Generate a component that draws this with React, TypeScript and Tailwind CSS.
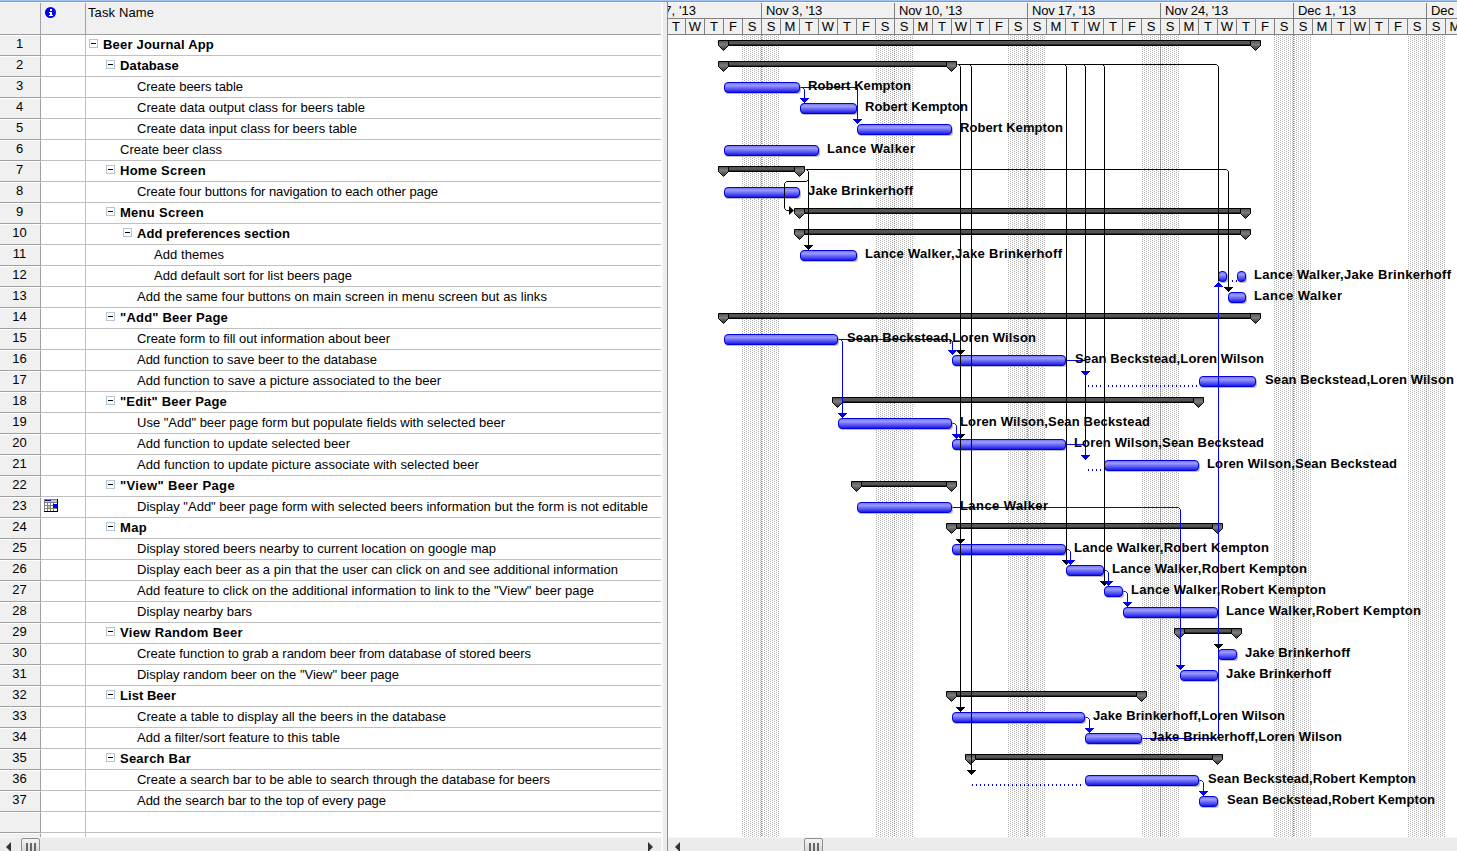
import { useLayoutEffect, useRef } from "react";

type Row = {
  name: string;
  level: number;
  width: number;
  group?: boolean;
  note?: boolean;
  summary?: [number, number];
  bars?: [number, number][];
  dots?: [number, number];
  who?: string;
  at?: number;
};

const LR = "Lance Walker,Robert Kempton";
const LJ = "Lance Walker,Jake Brinkerhoff";
const SL = "Sean Beckstead,Loren Wilson";
const LS = "Loren Wilson,Sean Beckstead";
const JL = "Jake Brinkerhoff,Loren Wilson";
const SR = "Sean Beckstead,Robert Kempton";
const RK = "Robert Kempton";
const LW = "Lance Walker";
const JB = "Jake Brinkerhoff";

const labelWidth: Record<string, number> = {
  [LR]: 195, [LJ]: 197, [SL]: 189, [LS]: 190, [JL]: 192, [SR]: 208, [RK]: 103, [LW]: 88, [JB]: 105,
};

const rows: Row[] = [
  { name: "Beer Journal App", level: 0, width: 111, group: true, summary: [723, 1255] },
  { name: "Database", level: 1, width: 59, group: true, summary: [723, 951] },
  { name: "Create beers table", level: 2, width: 106, bars: [[724, 800]], who: RK, at: 808 },
  { name: "Create data output class for beers table", level: 2, width: 228, bars: [[800, 857]], who: RK, at: 865 },
  { name: "Create data input class for beers table", level: 2, width: 220, bars: [[857, 952]], who: RK, at: 960 },
  { name: "Create beer class", level: 1, width: 102, bars: [[724, 819]], who: LW, at: 827 },
  { name: "Home Screen", level: 1, width: 86, group: true, summary: [723, 799] },
  { name: "Create four buttons for navigation to each other page", level: 2, width: 301, bars: [[724, 800]], who: JB, at: 808 },
  { name: "Menu Screen", level: 1, width: 84, group: true, summary: [799, 1245] },
  { name: "Add preferences section", level: 2, width: 153, group: true, summary: [799, 1245] },
  { name: "Add themes", level: 3, width: 70, bars: [[800, 857]], who: LJ, at: 865 },
  { name: "Add default sort for list beers page", level: 3, width: 198, bars: [[1218, 1227], [1237, 1246]], dots: [1232, 1237], who: LJ, at: 1254 },
  { name: "Add the same four buttons on main screen in menu screen but as links", level: 2, width: 410, bars: [[1228, 1246]], who: LW, at: 1254 },
  { name: "\"Add\" Beer Page", level: 1, width: 108, group: true, summary: [723, 1255] },
  { name: "Create form to fill out information about beer", level: 2, width: 253, bars: [[724, 838]], who: SL, at: 847 },
  { name: "Add function to save beer to the database", level: 2, width: 240, bars: [[952, 1066]], who: SL, at: 1075 },
  { name: "Add function to save a picture associated to the beer", level: 2, width: 304, bars: [[1199, 1256]], dots: [1088, 1198], who: SL, at: 1265 },
  { name: "\"Edit\" Beer Page", level: 1, width: 107, group: true, summary: [837, 1198] },
  { name: "Use \"Add\" beer page form but populate fields with selected beer", level: 2, width: 368, bars: [[838, 952]], who: LS, at: 960 },
  { name: "Add function to update selected beer", level: 2, width: 213, bars: [[952, 1066]], who: LS, at: 1074 },
  { name: "Add function to update picture associate with selected beer", level: 2, width: 342, bars: [[1104, 1199]], dots: [1088, 1103], who: LS, at: 1207 },
  { name: "\"View\" Beer Page", level: 1, width: 115, group: true, summary: [856, 951] },
  { name: "Display \"Add\" beer page form with selected beers information but the form is not editable", level: 2, width: 511, note: true, bars: [[857, 952]], who: LW, at: 960 },
  { name: "Map", level: 1, width: 27, group: true, summary: [951, 1217] },
  { name: "Display stored beers nearby to current location on google map", level: 2, width: 359, bars: [[952, 1066]], who: LR, at: 1074 },
  { name: "Display each beer as a pin that the user can click on and see additional information", level: 2, width: 481, bars: [[1066, 1104]], who: LR, at: 1112 },
  { name: "Add feature to click on the additional information to link to the \"View\" beer page", level: 2, width: 457, bars: [[1104, 1123]], who: LR, at: 1131 },
  { name: "Display nearby bars", level: 2, width: 115, bars: [[1123, 1218]], who: LR, at: 1226 },
  { name: "View Random Beer", level: 1, width: 123, group: true, summary: [1179, 1236] },
  { name: "Create function to grab a random beer from database of stored beers", level: 2, width: 394, bars: [[1218, 1237]], who: JB, at: 1245 },
  { name: "Display random beer on the \"View\" beer page", level: 2, width: 262, bars: [[1180, 1218]], who: JB, at: 1226 },
  { name: "List Beer", level: 1, width: 56, group: true, summary: [951, 1141] },
  { name: "Create a table to display all the beers in the database", level: 2, width: 309, bars: [[952, 1085]], who: JL, at: 1093 },
  { name: "Add a filter/sort feature to this table", level: 2, width: 203, bars: [[1085, 1142]], who: JL, at: 1150 },
  { name: "Search Bar", level: 1, width: 71, group: true, summary: [970, 1217] },
  { name: "Create a search bar to be able to search through the database for beers", level: 2, width: 413, bars: [[1085, 1199]], dots: [972, 1084], who: SR, at: 1208 },
  { name: "Add the search bar to the top of every page", level: 2, width: 249, bars: [[1199, 1218]], who: SR, at: 1227 },
];

const indents = ["pl-[3px]", "pl-[20px]", "pl-[37px]", "pl-[54px]"];
const leafIndents = ["pl-[17px]", "pl-[34px]", "pl-[51px]", "pl-[68px]"];
const weeks = ["Oct 27, '13", "Nov 3, '13", "Nov 10, '13", "Nov 17, '13", "Nov 24, '13", "Dec 1, '13", "Dec 8, '13"];
const days = ["S", "M", "T", "W", "T", "F", "S"];
const top = (n: number) => 35 + 21 * (n - 1);

function FitText({ text, width, bold }: { text: string; width: number; bold?: boolean }) {
  const ref = useRef<HTMLSpanElement>(null);
  useLayoutEffect(() => {
    const el = ref.current;
    if (!el) return;
    el.style.letterSpacing = "0px";
    const natural = el.getBoundingClientRect().width;
    el.style.letterSpacing = `${(width - natural) / text.length}px`;
  }, [text, width]);
  return (
    <span ref={ref} className={bold ? "whitespace-pre font-bold" : "whitespace-pre"}>
      {text}
    </span>
  );
}

function InfoIcon() {
  return (
    <svg width="12" height="12" viewBox="0 0 12 12" className="block">
      <circle cx="5.5" cy="5.5" r="5.5" fill="#0000f0" />
      <path d="M5 2h2v2H5zM4 5h3v3h1v1H4V8h1V6H4z" fill="#fff" shapeRendering="crispEdges" />
    </svg>
  );
}

function CalendarIcon() {
  return (
    <svg width="14" height="13" viewBox="0 0 14 13" className="block" shapeRendering="crispEdges">
      <rect width="14" height="13" fill="#000" />
      <rect width="13" height="12" fill="#808080" />
      <rect x="1" y="1" width="12" height="2" fill="#c8c8c8" />
      <rect x="1" y="1" width="6" height="1" fill="#0000a0" />
      <path d="M1 4h2v2H1zM4 4h2v2H4zM7 4h2v2H7zM10 4h3v1h-3zM1 7h2v2H1zM7 7h2v2H7zM1 10h2v2H1zM4 10h2v2H4zM7 10h2v2H7zM10 10h3v2h-3z" fill="#fff" />
      <rect x="4" y="7" width="2" height="2" fill="#c0c0c0" />
      <rect x="9" y="5" width="4" height="4" fill="#0000f0" />
    </svg>
  );
}

function Arrow({ left }: { left?: boolean }) {
  return (
    <svg width="5" height="10" viewBox="0 0 5 10" className="block">
      <path d={left ? "M5 0v10L0 5z" : "M0 0v10l5-5z"} fill="#333" />
    </svg>
  );
}

function Thumb() {
  return (
    <div className="flex h-[16px] w-[19px] justify-center gap-[2px] rounded-t-[2px] border border-[#8e8e8e] bg-linear-to-b from-[#f4f4f4] to-[#d4d4d4] pt-[4px]">
      <div className="h-[10px] w-[2px] bg-[#666]" />
      <div className="h-[10px] w-[2px] bg-[#666]" />
      <div className="h-[10px] w-[2px] bg-[#666]" />
    </div>
  );
}

function Cap({ x, y }: { x: number; y: number }) {
  return (
    <path d={`M${x - 4.5} ${y + 0.5}h10v5l-5 5l-5-5z`} fill="url(#cap)" stroke="#000" />
  );
}

function Link({ d, blue }: { d: string; blue?: boolean }) {
  return <path d={d} transform="translate(.5 .5)" fill="none" stroke={blue ? "#0000f0" : "#000"} />;
}

function Head({ x, y, blue }: { x: number; y: number; blue?: boolean }) {
  return (
    <path
      d={`M${x - 4} ${y}h9v1h-1v1h-1v1h-1v1h-1v1h-1v-1h-1v-1h-1v-1h-1v-1h-1z`}
      fill={blue ? "#0000f0" : "#000"}
      shapeRendering="crispEdges"
    />
  );
}

function Chart() {
  return (
    <svg width="789" height="802" viewBox="668 35 789 802" className="block shrink-0">
      <defs>
        <linearGradient id="task" x1="0" x2="0" y1="0" y2="1">
          <stop offset="0" stopColor="#7474f4" />
          <stop offset=".3" stopColor="#9898ff" />
          <stop offset=".6" stopColor="#6060f4" />
          <stop offset="1" stopColor="#1010e4" />
        </linearGradient>
        <linearGradient id="cap" x1="0" x2="0" y1="0" y2="1">
          <stop offset="0" stopColor="#505050" />
          <stop offset=".4" stopColor="#7c7c7c" />
          <stop offset="1" stopColor="#303030" />
        </linearGradient>
        <pattern id="hatch" width="4" height="4" patternUnits="userSpaceOnUse">
          <path d="M0 0h1v1H0zM2 1h1v1H2zM0 2h1v1H0zM2 3h1v1H2z" fill="#b0b0b0" shapeRendering="crispEdges" />
        </pattern>
      </defs>
      {[0, 1, 2, 3, 4, 5].map((i) => (
        <g key={i}>
          <rect x={742 + 133 * i} y="35" width="38" height="802" fill="url(#hatch)" />
          <path d={`M${761.5 + 133 * i} 35V837`} stroke="#808080" strokeDasharray="1 1" />
        </g>
      ))}
      {rows.map((r, i) => {
        const y = top(i + 1) + 5;
        return (
          <g key={i}>
            {r.summary && (
              <>
                <rect x={r.summary[0]} y={y} width={r.summary[1] - r.summary[0]} height="6" fill="#000" />
                <rect x={r.summary[0]} y={y + 1} width={r.summary[1] - r.summary[0]} height="3" fill="#555" />
                <rect x={r.summary[0]} y={y + 4} width={r.summary[1] - r.summary[0]} height="1" fill="#2c2c2c" />
                <Cap x={r.summary[0]} y={y} />
                <Cap x={r.summary[1]} y={y} />
              </>
            )}
            {r.dots && (
              <path d={`M${r.dots[0]} ${y + 10}H${r.dots[1]}`} stroke="#0000f0" strokeWidth="2" strokeDasharray="1 3" />
            )}
            {r.bars?.map(([a, b]) => (
              <g key={a}>
                <rect x={a + 1} y={y + 2} width={b - a} height="10" rx="3.5" fill="#bdbdbd" />
                <rect x={a + 0.5} y={y + 0.5} width={b - a - 1} height="10" rx="3.5" fill="url(#task)" stroke="#0000e0" />
              </g>
            ))}
          </g>
        );
      })}

      <Link d="M957 64H1216L1218 66V281" />
      <Link d="M958 64L960 66V707" />
      <Link d="M969 64L971 66V770" />
      <Link d="M1064 64L1066 66V560" />
      <Link d="M1083 64L1085 66V444" />
      <Link d="M1102 64L1104 66V581" />
      <Link d="M805 169H1226L1228 171V287" />
      <Link d="M806 169L808 171V245" />
      <Link d="M808 179L806 181H786L784 183V208L786 210H790" />
      <path d="M789 206v9l5-4.5z" />
      <Head x={960} y={350} />
      <Head x={960} y={434} />
      <Head x={960} y={539} />
      <Head x={960} y={707} />
      <Head x={971} y={770} />
      <Head x={1066} y={560} />
      <Head x={1104} y={581} />
      <Head x={1228} y={287} />
      <Head x={808} y={245} />

      <Link blue d="M800 87H857V119M802 87L804 89V98" />
      <Link blue d="M838 339H950L952 341V350M840 339L842 341V413" />
      <Link blue d="M1066 360H1085V371" />
      <Link blue d="M952 423H954L956 425V434" />
      <Link blue d="M1066 444H1085V455" />
      <Link blue d="M952 507H1178L1180 509V665" />
      <Link blue d="M1066 549H1068L1070 551V560" />
      <Link blue d="M1104 570H1106L1108 572V581" />
      <Link blue d="M1123 591H1125L1127 593V602" />
      <Link blue d="M1085 717H1087L1089 719V728" />
      <Link blue d="M1142 738H1216L1218 736V284" />
      <Link blue d="M1199 780H1201L1203 782V791" />
      <Head x={1218} y={644} />
      <Head blue x={804} y={98} />
      <Head blue x={857} y={119} />
      <Head blue x={952} y={350} />
      <Head blue x={842} y={413} />
      <Head blue x={1085} y={371} />
      <Head blue x={956} y={434} />
      <Head blue x={1085} y={455} />
      <Head blue x={1180} y={665} />
      <Head blue x={1070} y={560} />
      <Head blue x={1108} y={581} />
      <Head blue x={1127} y={602} />
      <Head blue x={1089} y={728} />
      <Head blue x={1203} y={791} />
      <path d="M1218 282h1v1h1v1h1v1h1v1h1v1h-9v-1h1v-1h1v-1h1v-1h1z" fill="#0000f0" shapeRendering="crispEdges" />

      {rows.map(
        (r, i) =>
          r.who && (
            <text
              key={i}
              x={r.at}
              y={top(i + 1) + 13}
              textLength={labelWidth[r.who]}
              className="fill-black text-[13px] font-bold"
            >
              {r.who}
            </text>
          ),
      )}
    </svg>
  );
}

export default function App() {
  return (
    <div className="flex h-[851px] w-[1457px] flex-col overflow-hidden bg-white font-['Liberation_Sans',Arial,sans-serif] text-[13px] leading-[15px] text-black">
      <div className="h-[2px] shrink-0 border-b border-[#8c98a8] bg-[#a4c4f4]" />
      <div className="flex min-h-0 flex-1">
        <div className="flex w-[661px] shrink-0 flex-col">
          <div className="flex h-[33px] shrink-0 border-t border-b border-t-white border-b-[#a0a0a0] bg-[#f0f0f0]">
            <div className="w-[41px] border-r border-[#a0a0a0]" />
            <div className="w-[45px] border-r border-[#a0a0a0] pt-[4px] pl-[4px]">
              <InfoIcon />
            </div>
            <div className="pt-[2px] pl-[2px]">
              <FitText text="Task Name" width={66} />
            </div>
          </div>
          <div className="min-h-0 flex-1 overflow-hidden">
            {rows.map((r, i) => (
              <div key={i} className="flex h-[21px]">
                <div className="w-[41px] border-t border-r border-b border-t-white border-r-[#a0a0a0] border-b-[#a0a0a0] bg-[#f0f0f0] pr-[1px] text-center">
                  {i + 1}
                </div>
                <div className="w-[45px] border-r border-b border-[#c0c0c0] pt-[2px] pl-[3px]">
                  {r.note && <CalendarIcon />}
                </div>
                <div
                  className={`flex flex-1 border-b border-[#c0c0c0] pt-[2px] ${(r.group ? indents : leafIndents)[r.level]}`}
                >
                  {r.group && (
                    <div className="mt-[2px] mr-[5px] flex h-[9px] w-[9px] shrink-0 items-center justify-center border border-[#b4c4d4] bg-white">
                      <div className="h-px w-[5px] bg-black" />
                    </div>
                  )}
                  <FitText text={r.name} width={r.width} bold={r.group} />
                </div>
              </div>
            ))}
            {[0, 1].map((i) => (
              <div key={i} className="flex h-[21px]">
                <div className="w-[41px] border-t border-r border-b border-t-white border-r-[#a0a0a0] border-b-[#a0a0a0] bg-[#f0f0f0]" />
                <div className="w-[45px] border-r border-b border-[#c0c0c0]" />
                <div className="flex-1 border-b border-[#c0c0c0]" />
              </div>
            ))}
          </div>
          <div className="flex h-[14px] shrink-0 border-t border-[#f6f6f6] bg-[#ececec]">
            <div className="w-[21px] pt-[4px] pl-[6px]">
              <Arrow left />
            </div>
            <Thumb />
            <div className="flex-1" />
            <div className="w-[13px] pt-[4px]">
              <Arrow />
            </div>
          </div>
        </div>
        <div className="w-[7px] shrink-0 border-r border-l-2 border-r-[#909090] border-l-[#fafafa] bg-[#ececec]" />
        <div className="flex w-[789px] shrink-0 flex-col overflow-hidden">
          <div className="h-[33px] w-[789px] shrink-0 overflow-hidden border-t border-b border-t-white border-b-[#808080] bg-[#f0f0f0]">
            <div className="-ml-[40px] flex h-[16px] w-[931px] border-b border-[#808080]">
              {weeks.map((w) => (
                <div key={w} className="w-[133px] border-l border-[#808080] pl-[4px] leading-[15px]">
                  <FitText text={w} width={w.length === 11 ? 63 : w[0] === "D" ? 58 : 56} />
                </div>
              ))}
            </div>
            <div className="-ml-[40px] flex h-[15px] w-[931px]">
              {weeks.map((w, i) =>
                days.map((d, j) => (
                  <div key={w + j} className="w-[19px] shrink-0 border-l border-[#808080] text-center leading-[16px]">
                    {(i === 0 && j < 2) || (i === 6 && j > 1) ? null : d}
                  </div>
                )),
              )}
            </div>
          </div>
          <Chart />
          <div className="flex h-[14px] shrink-0 border-t border-[#f6f6f6] bg-[#ececec]">
            <div className="w-[136px] pt-[4px] pl-[7px]">
              <Arrow left />
            </div>
            <Thumb />
          </div>
        </div>
      </div>
    </div>
  );
}
